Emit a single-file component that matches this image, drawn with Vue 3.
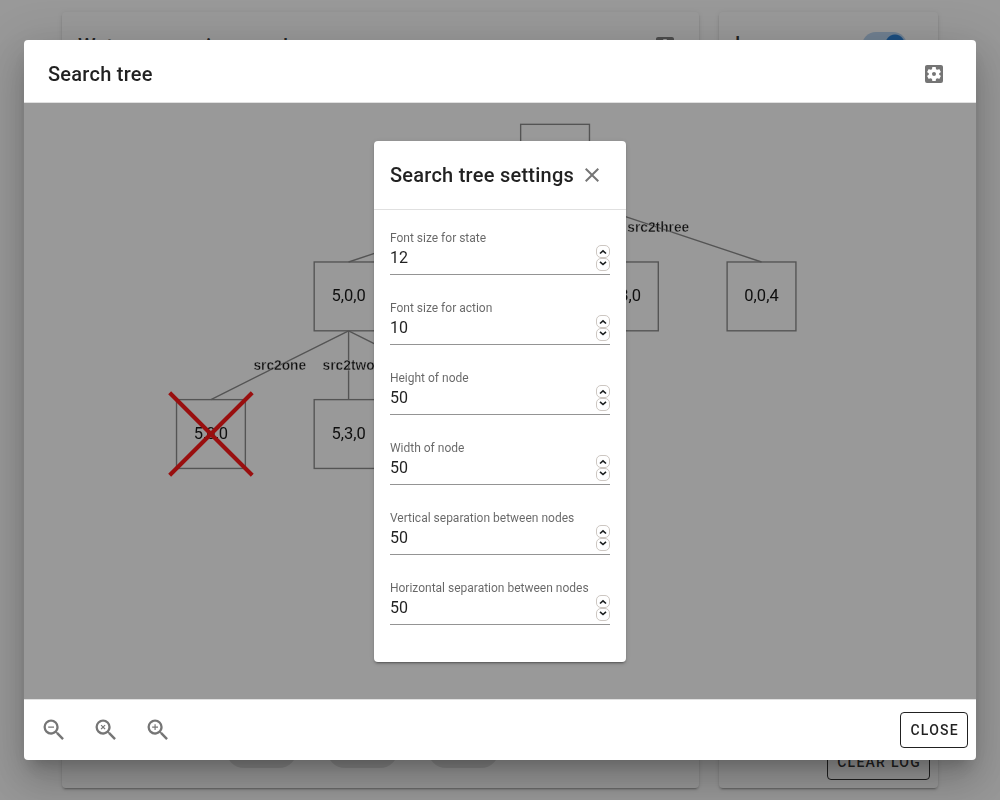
<script setup>
import { ref } from 'vue'

const settings = ref([
  { id: 'state-font', label: 'Font size for state', value: 12 },
  { id: 'action-font', label: 'Font size for action', value: 10 },
  { id: 'node-height', label: 'Height of node', value: 50 },
  { id: 'node-width', label: 'Width of node', value: 50 },
  { id: 'vertical-sep', label: 'Vertical separation between nodes', value: 50 },
  { id: 'horizontal-sep', label: 'Horizontal separation between nodes', value: 50 }
])

const size = 50
const nodes = [
  { x: 385.5, y: 15.5, text: '' },
  { x: 235.5, y: 115.5, text: '5,0,0' },
  { x: 435.5, y: 115.5, text: '0,3,0' },
  { x: 535.5, y: 115.5, text: '0,0,4' },
  { x: 135.5, y: 215.5, text: '5,0,0', pruned: true },
  { x: 235.5, y: 215.5, text: '5,3,0' },
  { x: 335.5, y: 215.5, text: '' }
]
const edges = [
  { from: 0, to: 1, text: '' },
  { from: 0, to: 2, text: '' },
  { from: 0, to: 3, text: 'src2three' },
  { from: 1, to: 4, text: 'src2one' },
  { from: 1, to: 5, text: 'src2two' },
  { from: 1, to: 6, text: '' }
].map(e => {
  const a = nodes[e.from]
  const b = nodes[e.to]
  return { x1: a.x, y1: a.y + size, x2: b.x, y2: b.y, text: e.text }
})

const lens = 'M15.5,14H14.71L14.43,13.73C15.41,12.59 16,11.11 16,9.5A6.5,6.5 0 0,0 9.5,3A6.5,6.5 0 0,0 3,9.5A6.5,6.5 0 0,0 9.5,16C11.11,16 12.59,15.41 13.73,14.43L14,14.71V15.5L19,20.5L20.5,19L15.5,14M9.5,14C7,14 5,12 5,9.5C5,7 7,5 9.5,5C12,5 14,7 14,9.5C14,12 12,14 9.5,14'
const zooms = [
  { name: 'Zoom out', path: lens + 'M7,9H12V10H7V9Z' },
  { name: 'Reset zoom', path: lens + 'M8.1,7.4L9.5,8.8L10.9,7.4L11.6,8.1L10.2,9.5L11.6,10.9L10.9,11.6L9.5,10.2L8.1,11.6L7.4,10.9L8.8,9.5L7.4,8.1Z' },
  { name: 'Zoom in', path: lens + 'M12,10H10V12H9V10H7V9H9V7H10V9H12V10Z' }
]
const cog = 'M17.25,12C17.25,12.23 17.23,12.46 17.2,12.68L18.68,13.84C18.81,13.95 18.85,14.13 18.76,14.29L17.36,16.71C17.27,16.86 17.09,16.92 16.93,16.86L15.19,16.16C14.83,16.44 14.43,16.67 14,16.85L13.75,18.7C13.72,18.87 13.57,19 13.4,19H10.6C10.43,19 10.28,18.87 10.25,18.7L10,16.85C9.56,16.67 9.17,16.44 8.81,16.16L7.07,16.86C6.91,16.92 6.73,16.86 6.64,16.71L5.24,14.29C5.15,14.13 5.19,13.95 5.32,13.84L6.8,12.68C6.77,12.46 6.75,12.23 6.75,12C6.75,11.77 6.77,11.54 6.8,11.32L5.32,10.16C5.19,10.05 5.15,9.86 5.24,9.71L6.64,7.29C6.73,7.13 6.91,7.07 7.07,7.13L8.81,7.84C9.17,7.56 9.56,7.32 10,7.15L10.25,5.29C10.28,5.13 10.43,5 10.6,5H13.4C13.57,5 13.72,5.13 13.75,5.29L14,7.15C14.43,7.32 14.83,7.56 15.19,7.84L16.93,7.13C17.09,7.07 17.27,7.13 17.36,7.29L18.76,9.71C18.85,9.86 18.81,10.05 18.68,10.16L17.2,11.32C17.23,11.54 17.25,11.77 17.25,12M19,3H5C3.89,3 3,3.89 3,5V19A2,2 0 0,0 5,21H19A2,2 0 0,0 21,19V5C21,3.89 20.11,3 19,3M12,10C10.89,10 10,10.89 10,12A2,2 0 0,0 12,14A2,2 0 0,0 14,12C14,10.89 13.1,10 12,10Z'
</script>

<template>
  <div class="app">
    <main class="page">
      <section class="card">
        <header class="card-head">
          <h2 class="title">Water measuring puzzle</h2>
          <button class="icon-btn" aria-label="Puzzle settings">
            <svg class="icon" viewBox="0 0 24 24"><path :d="cog" /></svg>
          </button>
        </header>
        <div class="jugs">
          <span v-for="n in 3" :key="n" class="jug"></span>
        </div>
      </section>
      <section class="card">
        <header class="card-head log-head">
          <h2 class="title">Log</h2>
          <input class="switch" type="checkbox" checked aria-label="Enable log" />
        </header>
        <footer class="log-foot">
          <button class="btn">CLEAR LOG</button>
        </footer>
      </section>
    </main>
    <div class="scrim"></div>

    <section class="dialog" role="dialog" aria-labelledby="tree-title">
      <header class="dialog-head">
        <h1 id="tree-title" class="title">Search tree</h1>
        <button class="icon-btn" aria-label="Search tree settings">
          <svg class="icon" viewBox="0 0 24 24"><path :d="cog" /></svg>
        </button>
      </header>

      <div class="canvas">
        <svg class="tree" viewBox="0 0 691 433">
          <line v-for="(e, i) in edges" :key="'l' + i" class="edge" :x1="e.x1" :y1="e.y1" :x2="e.x2" :y2="e.y2" />
          <text v-for="(e, i) in edges" :key="'t' + i" class="action" :x="(e.x1 + e.x2) / 2" :y="(e.y1 + e.y2) / 2 + 3.5">{{ e.text }}</text>
          <g v-for="(n, i) in nodes" :key="'n' + i">
            <rect class="node" :x="n.x - 25" :y="n.y" :width="size" :height="size" />
            <text class="state" :x="n.x" :y="n.y + 28.5">{{ n.text }}</text>
            <path v-if="n.pruned" class="cross" :d="`M${n.x - 30},${n.y - 5}l60,60m0,-60l-60,60`" />
          </g>
        </svg>
        <div class="shade">
          <form class="settings" @submit.prevent>
            <header class="settings-head">
              <h2 class="title">Search tree settings</h2>
              <button type="button" class="icon-btn" aria-label="Close settings">
                <svg class="icon" viewBox="0 0 24 24"><path d="M19,6.41L17.59,5L12,10.59L6.41,5L5,6.41L10.59,12L5,17.59L6.41,19L12,13.41L17.59,19L19,17.59L13.41,12L19,6.41Z" /></svg>
              </button>
            </header>
            <div class="fields">
              <div v-for="s in settings" :key="s.id" class="field">
                <label :for="s.id">{{ s.label }}</label>
                <div class="control">
                  <input :id="s.id" v-model.number="s.value" type="number" />
                  <span class="spinner">
                    <button type="button" :aria-label="'Increase ' + s.label" @click="s.value++">
                      <svg viewBox="0 0 12 11"><path d="M3 7.500L6 4.800L9 7.500" /></svg>
                    </button>
                    <button type="button" :aria-label="'Decrease ' + s.label" @click="s.value--">
                      <svg viewBox="0 0 12 11"><path d="M3 2.800L6 5.500L9 2.800" /></svg>
                    </button>
                  </span>
                </div>
              </div>
            </div>
          </form>
        </div>
      </div>

      <footer class="dialog-foot">
        <div class="zooms">
          <button v-for="z in zooms" :key="z.name" class="icon-btn zoom" :aria-label="z.name">
            <svg class="icon" viewBox="0 0 24 24"><path :d="z.path" /></svg>
          </button>
        </div>
        <button class="btn">CLOSE</button>
      </footer>
    </section>
  </div>
</template>

<style>
body {
  margin: 0;
  background: #fff;
}
</style>

<style scoped>
.app {
  font-family: Roboto, "Liberation Sans", sans-serif;
  color: rgba(0, 0, 0, 0.87);
  height: 100vh;
  overflow: hidden;
}
.app * {
  box-sizing: border-box;
}
.page {
  display: grid;
  grid-template-columns: minmax(0, 1fr) 219px;
  gap: 20px;
  height: 100%;
  padding: 12px 62px;
  box-sizing: border-box;
}
.card {
  display: flex;
  flex-direction: column;
  justify-content: space-between;
  border-radius: 4px;
  background: #fff;
  box-shadow: 0 3px 1px -2px rgba(0, 0, 0, 0.2), 0 2px 2px 0 rgba(0, 0, 0, 0.14), 0 1px 5px 0 rgba(0, 0, 0, 0.12);
}
.card-head {
  display: flex;
  align-items: center;
  justify-content: space-between;
  padding: 16px 16px 0;
}
.log-head {
  align-items: flex-start;
  padding: 16px 31px 0 16px;
}
.title {
  margin: 0;
  font-size: 20px;
  line-height: 32px;
  font-weight: 500;
  letter-spacing: 0.0125em;
  white-space: nowrap;
}
.icon-btn {
  display: flex;
  align-items: center;
  justify-content: center;
  width: 36px;
  height: 36px;
  padding: 0;
  border: 0;
  background: none;
  color: rgba(0, 0, 0, 0.54);
}
.icon {
  width: 24px;
  height: 24px;
  fill: currentColor;
}
.switch {
  appearance: none;
  width: 45px;
  height: 28px;
  margin: 4px 0 0;
  border-radius: 14px;
  background: radial-gradient(circle at 33px 12px, #1976d2 9px, transparent 10px), #b5d3f1;
}
.jugs {
  display: flex;
  justify-content: center;
  gap: 30px;
  padding: 0 36px 20px 0;
}
.jug {
  width: 71px;
  height: 36px;
  border-radius: 18px;
  background: #e0e0e0;
}
.log-foot {
  display: flex;
  justify-content: flex-end;
  padding: 8px;
}
.btn {
  height: 36px;
  padding: 0 8px 0 9px;
  border: 1px solid currentColor;
  border-radius: 4px;
  background: none;
  color: rgba(0, 0, 0, 0.87);
  font-family: inherit;
  font-size: 14px;
  font-weight: 500;
  letter-spacing: 0.09em;
}
.scrim {
  position: fixed;
  inset: 0;
  background: rgba(33, 33, 33, 0.46);
}
.dialog {
  position: fixed;
  inset: 40px 24px;
  display: flex;
  flex-direction: column;
  border-radius: 4px;
  background: #fff;
  box-shadow: 0 11px 15px -7px rgba(0, 0, 0, 0.2), 0 24px 38px 3px rgba(0, 0, 0, 0.14), 0 9px 46px 8px rgba(0, 0, 0, 0.12);
}
.dialog-head {
  display: flex;
  align-items: center;
  justify-content: space-between;
  height: 63px;
  padding: 5px 24px 0;
  border-bottom: 1px solid #e0e0e0;
}
.canvas {
  position: relative;
  flex: 1;
  min-height: 0;
}
.tree {
  display: block;
  width: 100%;
  height: 100%;
}
.edge,
.node {
  fill: none;
  stroke: gray;
  stroke-width: 1;
}
.state {
  font-size: 12px;
  fill: #000;
  text-anchor: middle;
}
.action {
  font-family: "Liberation Sans", sans-serif;
  font-size: 10px;
  font-weight: 700;
  fill: #000;
  stroke: #fff;
  stroke-width: 0.25;
  text-anchor: middle;
}
.cross {
  fill: none;
  stroke: red;
  stroke-width: 3;
}
.shade {
  position: absolute;
  inset: 0;
  display: flex;
  align-items: center;
  justify-content: center;
  background: rgba(33, 33, 33, 0.46);
}
.settings {
  border-radius: 4px;
  background: #fff;
  box-shadow: 0 3px 1px -2px rgba(0, 0, 0, 0.2), 0 2px 2px 0 rgba(0, 0, 0, 0.14), 0 1px 5px 0 rgba(0, 0, 0, 0.12);
}
.settings-head {
  display: flex;
  align-items: center;
  padding: 16px;
  border-bottom: 1px solid #e0e0e0;
}
.fields {
  padding: 20px 16px 12px;
}
.field {
  height: 70px;
}
.field label {
  display: block;
  font-size: 12px;
  line-height: 16px;
  color: rgba(0, 0, 0, 0.6);
}
.control {
  display: flex;
  align-items: flex-start;
  justify-content: space-between;
  height: 29px;
  border-bottom: 1px solid rgba(0, 0, 0, 0.42);
}
.control input {
  appearance: textfield;
  flex: 1;
  width: 100px;
  height: 28px;
  padding: 0 0 4px;
  border: 0;
  outline: 0;
  background: none;
  color: inherit;
  font-family: inherit;
  font-size: 16px;
}
.control input::-webkit-inner-spin-button {
  appearance: none;
}
.spinner {
  display: flex;
  flex-direction: column;
  margin-top: -1px;
}
.spinner button {
  width: 14px;
  height: 13px;
  padding: 0;
  border: 1px solid #cdc7c2;
  border-radius: 5px;
  background: #fff;
}
.spinner svg {
  display: block;
  width: 12px;
  height: 11px;
  fill: none;
  stroke: #1c1f20;
  stroke-width: 1.6;
}
.dialog-foot {
  display: flex;
  align-items: center;
  justify-content: space-between;
  height: 61px;
  padding: 0 8px;
  border-top: 1px solid #e0e0e0;
}
.zooms {
  display: flex;
  gap: 16px;
  padding-left: 4px;
}
.zoom .icon {
  width: 28px;
  height: 28px;
}
</style>
